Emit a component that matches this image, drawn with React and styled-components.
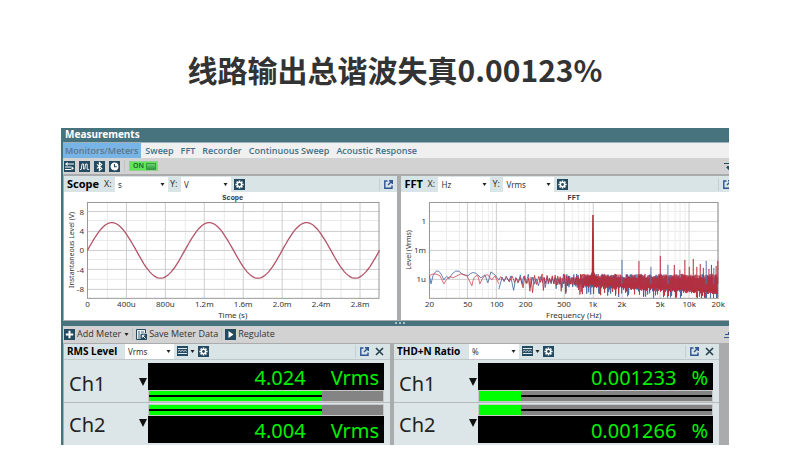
import React from "react";
import styled, { createGlobalStyle } from "styled-components";

const GlobalStyle = createGlobalStyle`
  * { box-sizing: border-box; }
  body { margin: 0; background: #fff; font-family: "Noto Sans", "Open Sans", sans-serif; }
  button, select { font: inherit; color: inherit; margin: 0; padding: 0; border: 0; background: none; }
  svg { display: block; flex: none; }
`;

const NAVY = "#234a60";
const TEAL = "#47737f";

const Page = styled.main`
  padding: 47px 61px 30px;
`;

const Heading = styled.h1`
  margin: 0 0 37px;
  text-align: center;
  font: 700 30px/44px "Noto Sans CJK SC", sans-serif;
  color: #333;
`;

const Window = styled.section`
  border-left: 2px solid ${TEAL};
  background: #d2d2d2;
  font-size: 9px;
  line-height: 14px;
  color: #333;
  overflow: hidden;
`;

const TitleBar = styled.h2`
  margin: 0;
  height: 15px;
  padding-left: 2px;
  border-bottom: 1px solid #9db3bb;
  background: ${TEAL};
  color: #fff;
  font-size: 10px;
  line-height: 13px;
  font-weight: 700;
`;

const Tabs = styled.nav`
  display: flex;
  height: 15px;
  background: #f0f0f0;
`;

const Tab = styled.button`
  padding: 0 3px 0 ${(p) => (p.$active ? 2 : 4)}px;
  background: ${(p) => (p.$active ? "#78b4e6" : "none")};
  color: ${(p) => (p.$active ? "#5f7686" : "#3d7087")};
  font-family: "Open Sans", sans-serif;
  font-weight: 600;
  white-space: nowrap;
`;

const ToolBar = styled.div`
  display: flex;
  align-items: center;
  gap: ${(p) => p.$gap}px;
  height: 18px;
  padding-left: 1px;
  background: #d2d2d2;
  border-bottom: ${(p) => p.$rule}px solid #a9abad;
`;

const IconButton = styled.button`
  display: flex;
  align-items: center;
  flex: none;
  gap: 2px;
  color: ${NAVY};
  white-space: nowrap;
`;

const CommandText = styled.span`
  font-family: "Open Sans", sans-serif;
  color: #333;
`;

const Toggle = styled.button`
  display: flex;
  align-items: center;
  justify-content: space-between;
  width: 29px;
  height: 10px;
  padding: 0 1px 0 3px;
  border: 1px solid #8fd08a;
  background: #5fe657;
  color: #245b2c;
  font-size: 7px;
  line-height: 8px;
  font-weight: 600;
`;

const Knob = styled.span`
  width: 10px;
  height: 7px;
  border: 1px solid #3c9a45;
  background: linear-gradient(#6ad36a, #2f9a40);
`;

const Separator = styled.span`
  width: 1px;
  height: 12px;
  background: #bfc4c6;
`;

const Spacer = styled.span`
  flex: 1;
`;

const Edge = styled.span`
  display: flex;
  width: 5px;
  overflow: hidden;
`;

const Plots = styled.div`
  display: grid;
  grid-template-columns: 334fr 4px 328fr;
  padding-left: 1px;
  background: #a9abad;
  border-bottom: 1px solid #a9abad;
`;

const Panel = styled.section`
  min-width: 0;
  background: ${(p) => p.$bg};
`;

const PanelHeader = styled.header`
  display: flex;
  align-items: center;
  height: 16px;
  padding-left: 3px;
  background: #d9e4e7;
  border-bottom: ${(p) => (p.$line ? "1px solid #bfc9cc" : "0")};
`;

const PanelTitle = styled.h3`
  margin: 0;
  width: ${(p) => p.$width}px;
  flex: none;
  font-size: ${(p) => p.$size}px;
  font-weight: 700;
  color: #000;
  white-space: nowrap;
`;

const FieldLabel = styled.label`
  width: 11px;
  flex: none;
  white-space: nowrap;
`;

const Picker = styled.span`
  display: grid;
  align-items: center;
  flex: none;
  width: ${(p) => p.$width}px;
  height: 15px;
  margin-right: ${(p) => p.$after}px;
  background: #fff;
  > * { grid-area: 1 / 1; }
  > svg { justify-self: end; margin-right: 3px; pointer-events: none; }
`;

const Select = styled.select`
  appearance: none;
  width: 100%;
  height: 15px;
  padding-left: 3px;
  font-size: 8px;
  line-height: 15px;
`;

const PanelActions = styled.div`
  display: flex;
  align-items: center;
  flex: none;
  gap: 6px;
  width: ${(p) => p.$width}px;
  height: 13px;
  margin-left: auto;
  padding-left: 4px;
  border-left: 1px solid #c5d0d3;
  overflow: hidden;
`;

const ToolGroup = styled.div`
  display: flex;
  gap: 3px;
`;

const Chart = styled.svg`
  width: 100%;
  height: auto;
  background: #fff;
  font-size: 8px;
  fill: #333;
`;

const PlotTitle = styled.text`
  font: 700 7px "Liberation Mono", monospace;
  text-anchor: middle;
`;

const AxisText = styled.text`
  font-size: ${(p) => p.$size || 8}px;
  text-anchor: ${(p) => p.$anchor || "middle"};
`;

const Splitter = styled.div`
  display: flex;
  justify-content: center;
  align-items: center;
  gap: 2px;
  height: 5px;
  padding-left: 8px;
  background: ${TEAL};
`;

const Grip = styled.i`
  width: 2px;
  height: 2px;
  background: #a9c3cc;
`;

const Meters = styled.div`
  display: grid;
  grid-template-columns: 326fr 4px 325fr 10px;
  padding-left: 1px;
  background: #a9abad;
`;

const Channel = styled.div`
  display: grid;
  grid-template-columns: 75px 9px 1fr;
  padding: ${(p) => (p.$flip ? "1px 6px 2px 0" : "3px 6px 0 0")};
  border-bottom: ${(p) => (p.$flip ? "0" : "1px solid #b5babc")};
`;

const ChannelName = styled.div`
  height: 39px;
  padding-left: 5px;
  font-size: 20px;
  line-height: 42px;
  color: #222;
`;

const ChannelMenu = styled.button`
  display: flex;
  align-items: center;
`;

const Display = styled.div`
  display: flex;
  flex-direction: ${(p) => (p.$flip ? "column-reverse" : "column")};
  justify-content: flex-end;
  min-width: 0;
`;

const Readout = styled.div`
  display: flex;
  justify-content: flex-end;
  gap: ${(p) => p.$gap}px;
  height: 27px;
  padding-right: 5px;
  background: #000;
  color: #00f000;
  font-size: 20px;
  line-height: 29px;
`;

const Track = styled.div`
  position: relative;
  height: 12px;
  border: 1px solid #c8c8c8;
  background: #848484;
`;

const Fill = styled.div`
  height: 100%;
  background: #00ff00;
`;

const CenterLine = styled.div`
  position: absolute;
  top: 4px;
  left: ${(p) => (p.$rest ? "auto" : 0)};
  right: ${(p) => (p.$rest ? 0 : "auto")};
  height: 2px;
  background: #000;
`;

const Caret = () => (
  <svg width="5" height="3" viewBox="0 0 5 3"><path d="M.5 0h4L2.5 3z" fill="#222" /></svg>
);

const Tile = ({ children }) => (
  <svg width="11" height="11" viewBox="0 0 11 11">
    <rect width="11" height="11" fill={NAVY} />
    <g fill="none" stroke="#fff" strokeWidth="1.1">{children}</g>
  </svg>
);

const SwapIcon = () => (
  <Tile><path d="M3 3h7M1 6h6M1 8.5h6" /><path d="M1 3l2.5-2v4zM10 7.2L7.500 5.200v4z" fill="#fff" stroke="none" /></Tile>
);
const WavesIcon = () => (
  <Tile><path d="M1 8.500h1.200L3 3h1.600v5h1.200L6.600 3h1.600v5.400h2" strokeWidth=".9" /></Tile>
);
const BluetoothIcon = () => (
  <Tile><path d="M3 3.400l4.800 4L5.400 9.500v-8l2.400 2L3 7.500" /></Tile>
);
const ClockIcon = () => (
  <Tile><circle cx="5.5" cy="5.5" r="3.4" fill="#fff" /><path d="M5.5 3v2.800h2.300" stroke={NAVY} /></Tile>
);
const GearIcon = () => (
  <Tile>
    <path d="M5.5 1.400v8.200M1.400 5.500h8.200M2.600 2.600l5.800 5.800M8.400 2.600L2.600 8.400" strokeWidth="1.6" />
    <circle cx="5.5" cy="5.5" r="2.8" fill="#fff" stroke="none" />
    <circle cx="5.5" cy="5.5" r="1.4" fill={NAVY} stroke="none" />
  </Tile>
);
const PlusIcon = () => (
  <Tile><path d="M5.5 1.800v7.400M1.800 5.500h7.400" strokeWidth="2" /></Tile>
);
const PlayIcon = () => (
  <Tile><path d="M3.5 2l5 3.500-5 3.500z" fill="#fff" stroke="none" /></Tile>
);
const SaveIcon = () => (
  <svg width="11" height="11" viewBox="0 0 11 11" fill="none" stroke={NAVY}>
    <path d="M9.5 4V.5h-9v10H5" fill="#e9eef0" />
    <path d="M2 3h2M5 3h3M2 5h2M2 7h2M2 9h2" strokeWidth=".8" />
    <path d="M5 5.200h5.500v5.300H5z" fill={NAVY} />
    <path d="M9.5 9.500L6.500 6.500M6.300 8.600V6.300h2.300" stroke="#fff" />
  </svg>
);
const RangeIcon = () => (
  <svg width="11" height="10" viewBox="0 0 12 10" preserveAspectRatio="none">
    <path fill={NAVY} d="M0 0h12v10H0z" />
    <path fill="#d9e4e7" d="M1 2h10v1H1zM1 7h10v1H1z" />
    <path fill="none" stroke="#fff" strokeWidth=".8" d="M1 5.400l1.600-1 1.600 1 1.600-1 1.600 1 1.600-1 1.600 1" />
  </svg>
);
const OpenIcon = () => (
  <svg width="9" height="9" viewBox="0 0 9 9" fill="none" stroke="#2e5493" strokeWidth="1.4">
    <path d="M3.5 1H.8v7.300H8V5.600M5 .8h3.300V4M8 1L4 5" />
  </svg>
);
const CloseIcon = () => (
  <svg width="9" height="9" viewBox="0 0 9 9" stroke="#24404f" strokeWidth="1.6">
    <path d="M1 1l7 7M8 1L1 8" />
  </svg>
);
const MenuEdgeIcon = () => (
  <svg width="9" height="9" viewBox="0 0 9 9" fill="none" stroke={NAVY}>
    <path d="M0 1.500h9M3 4.500h6" /><path d="M2 5h5L4.500 8z" fill={NAVY} stroke="none" />
  </svg>
);
const DownEdgeIcon = () => (
  <svg width="9" height="9" viewBox="0 0 9 9" fill="none" stroke="#2e5493">
    <path d="M0 7.500h9M1 4.500h6M4.500 2v3" />
  </svg>
);
const DropTriangle = () => (
  <svg width="8" height="8" viewBox="0 0 8 8"><path d="M0 0h8L4 8z" fill="#111" /></svg>
);

function Choice({ label, value, width, after = 0 }) {
  return (
    <Picker $width={width} $after={after}>
      <Select aria-label={label} defaultValue={value}>
        <option>{value}</option>
      </Select>
      <Caret />
    </Picker>
  );
}

function AxisChoice({ id, axis, value, width, after }) {
  return (
    <>
      <FieldLabel htmlFor={id}>{axis}:</FieldLabel>
      <Picker $width={width} $after={after}>
        <Select id={id} defaultValue={value}>
          <option>{value}</option>
        </Select>
        <Caret />
      </Picker>
    </>
  );
}

const scopeX = (ms) => 23.5 + ms * 97.5;
const scopeY = (v) => 58.5 - v * 4.85;
const sinePath = Array.from({ length: 151 }, (_, i) => {
  const t = i * 0.02;
  return `${i ? "L" : "M"}${scopeX(t).toFixed(1)} ${scopeY(5.75 * Math.sin(2 * Math.PI * t)).toFixed(1)}`;
}).join("");

function ScopeChart() {
  return (
    <Chart viewBox="0 0 334 128" role="img" aria-label="Scope">
      <PlotTitle x="169" y="8">Scope</PlotTitle>
      <g stroke="#e9e9e9">
        {[0.2, 0.6, 1, 1.4, 1.8, 2.2, 2.6].map((t) => (
          <path key={t} d={`M${Math.round(scopeX(t)) + 0.5} 10V107`} />
        ))}
        {[6, 2, -2, -6].map((v) => (
          <path key={v} d={`M23 ${Math.round(scopeY(v)) - 0.5}H316`} />
        ))}
      </g>
      <g stroke="#cdcdcd">
        {[0.4, 0.8, 1.2, 1.6, 2, 2.4, 2.8].map((t) => (
          <path key={t} d={`M${Math.round(scopeX(t)) - 0.5} 10V107`} />
        ))}
        {[8, 4, 0, -4, -8].map((v) => (
          <path key={v} d={`M23 ${Math.floor(scopeY(v)) + 0.5}H316`} />
        ))}
      </g>
      <rect x="23.5" y="10.5" width="292" height="96" fill="none" stroke="#999" />
      <path d={sinePath} fill="none" stroke="#b4546a" strokeWidth="1.3" />
      {[8, 4, 0, -4, -8].map((v) => (
        <AxisText key={v} x="20" y={scopeY(v) + 3} $anchor="end">{v}</AxisText>
      ))}
      {["0", "400u", "800u", "1.2m", "1.6m", "2.0m", "2.4m", "2.8m"].map((s, i) => (
        <AxisText key={s} x={scopeX(i * 0.4)} y="115">{s}</AxisText>
      ))}
      <AxisText x="169" y="126">Time (s)</AxisText>
      <AxisText $size={7} transform="translate(10 58) rotate(-90)">Instantaneous Level (V)</AxisText>
    </Chart>
  );
}

const fftX = (hz) => 28.5 + (Math.log10(hz) - Math.log10(20)) * 96.4;

function noisePath(seed) {
  let state = seed;
  const random = () => {
    state = (state * 1664525 + 1013904223) % 4294967296;
    return state / 4294967296;
  };
  let d = "";
  let x = 98;
  let i = 0;
  while (x < 317) {
    const progress = (x - 98) / 220;
    const dip = random() < 0.25 ? 4 + 5 * random() : 0;
    const up = 82 + 5 * random();
    const down = 88 + 11 * progress + 4 * random() + dip;
    const y = Math.min(i % 2 ? up : down, 106);
    d += `${i ? "L" : "M"}${x.toFixed(1)} ${y.toFixed(1)}`;
    x += Math.max(0.5, (2.8 - progress * 6) * (0.6 + random() * 0.8));
    i += 1;
  }
  return d;
}

const lowBlue = "M28.5 84L30 92 32 84Q36 75 40 82L43 88Q46 82 48 87Q55 74 61 82L67 84Q72 78 77 83L80 86 84 83 87 91 90 80 94 83 98 88";
const lowRed = "M28.5 84Q33 80 39 84L43 92Q48 82 52 86L60 82 66 84 71 94Q73 82 77 84L79 92Q83 82 87 83L91 88 94 84 98 92";
const harmonics = [
  [2000, 68, 1], [3000, 69, 0], [4000, 75, 1], [5000, 64, 0], [6000, 73, 1], [7000, 73, 0], [8000, 78, 0],
  [9000, 68, 0], [10000, 75, 0], [11000, 67, 0], [12000, 75, 0], [13000, 72, 0], [14000, 76, 0],
  [15000, 69, 1], [16000, 77, 0], [17000, 73, 0], [18000, 76, 1], [19000, 74, 0], [19800, 69, 0],
];
const minorHz = [30, 40, 60, 70, 80, 90, 300, 400, 600, 700, 800, 900, 3000, 4000, 6000, 7000, 8000, 9000];
const majorHz = [[20, "20"], [50, "50"], [100, "100"], [200, "200"], [500, "500"], [1000, "1k"], [2000, "2k"], [5000, "5k"], [10000, "10k"], [20000, "20k"]];
const levels = [[29.5, "1"], [58.5, "1m"], [87.5, "1u"]];

function FftChart() {
  return (
    <Chart viewBox="0 0 328 128" role="img" aria-label="FFT">
      <PlotTitle x="173" y="8">FFT</PlotTitle>
      <g stroke="#ececec">
        {minorHz.map((f) => <path key={f} d={`M${Math.round(fftX(f)) + 0.5} 10V107`} />)}
        {[19.5, 39.5, 48.5, 68.5, 77.5, 97.5].map((y) => <path key={y} d={`M29 ${y}H318`} />)}
      </g>
      <g stroke="#cdcdcd">
        {majorHz.map(([f]) => <path key={f} d={`M${Math.floor(fftX(f)) + 0.5} 10V107`} />)}
        {levels.map(([y]) => <path key={y} d={`M29 ${y}H318`} />)}
      </g>
      <rect x="28.5" y="10.5" width="289" height="96" fill="none" stroke="#999" />
      <g fill="none" strokeWidth="0.8" strokeLinejoin="bevel">
        <path d={lowBlue} stroke="#3d61a0" />
        <path d={lowRed} stroke="#d24650" />
        <path d={noisePath(17)} stroke="#3d61a0" />
        <path d={noisePath(91)} stroke="#bb2b38" />
        {harmonics.map(([f, y, blue]) => (
          <path key={f} d={`M${fftX(f).toFixed(1)} 92V${y}`} stroke={blue ? "#5575ad" : "#bb2b38"} strokeWidth="1" />
        ))}
      </g>
      <path d="M188 90L191 80 191.500 23h1.500L193.500 80 197 90z" fill="#b32c38" />
      {levels.map(([y, s]) => <AxisText key={s} x="25" y={y + 3} $anchor="end">{s}</AxisText>)}
      {majorHz.map(([f, s]) => <AxisText key={s} x={fftX(f)} y="115">{s}</AxisText>)}
      <AxisText x="173" y="126">Frequency (Hz)</AxisText>
      <AxisText $size={7} transform="translate(10 58) rotate(-90)">Level (Vrms)</AxisText>
    </Chart>
  );
}

function ChannelRow({ name, value, unit, level, lineOverRest, flip, gap }) {
  const lineWidth = lineOverRest ? 100 - level : level;
  return (
    <Channel $flip={flip}>
      <ChannelName>{name}</ChannelName>
      <ChannelMenu aria-label={`${name} options`}><DropTriangle /></ChannelMenu>
      <Display $flip={flip}>
        <Readout $gap={gap}><span>{value}</span><span>{unit}</span></Readout>
        <Track role="meter" aria-label={`${name} level`} aria-valuenow={level} aria-valuemin={0} aria-valuemax={100}>
          <Fill style={{ width: `${level}%` }} />
          <CenterLine $rest={lineOverRest} style={{ width: `${lineWidth}%` }} />
        </Track>
      </Display>
    </Channel>
  );
}

function MeterPanel({ title, titleWidth, unit, pickerWidth, actionsWidth, rows, level, lineOverRest, gap }) {
  return (
    <Panel $bg="#dce6e8">
      <PanelHeader $line>
        <PanelTitle $width={titleWidth} $size={10}>{title}</PanelTitle>
        <Choice label={`${title} unit`} value={unit} width={pickerWidth} after={3} />
        <ToolGroup>
          <IconButton aria-label="Range"><RangeIcon /><Caret /></IconButton>
          <IconButton aria-label="Settings"><GearIcon /></IconButton>
        </ToolGroup>
        <PanelActions $width={actionsWidth}>
          <IconButton aria-label="Open in window"><OpenIcon /></IconButton>
          <IconButton aria-label="Close"><CloseIcon /></IconButton>
        </PanelActions>
      </PanelHeader>
      {rows.map((value, i) => (
        <ChannelRow key={value} name={`Ch${i + 1}`} value={value} unit={unit} level={level}
          lineOverRest={lineOverRest} flip={i === 1} gap={gap} />
      ))}
    </Panel>
  );
}

export default function App() {
  return (
    <Page>
      <GlobalStyle />
      <Heading>线路输出总谐波失真0.00123%</Heading>
      <Window>
        <TitleBar>Measurements</TitleBar>
        <Tabs>
          <Tab $active>Monitors/Meters</Tab>
          {["Sweep", "FFT", "Recorder", "Continuous Sweep", "Acoustic Response"].map((t) => <Tab key={t}>{t}</Tab>)}
        </Tabs>
        <ToolBar $gap={4} $rule={2}>
          <IconButton aria-label="Input and output"><SwapIcon /></IconButton>
          <IconButton aria-label="Signals"><WavesIcon /></IconButton>
          <IconButton aria-label="Bluetooth"><BluetoothIcon /></IconButton>
          <IconButton aria-label="Clock"><ClockIcon /></IconButton>
          <Separator />
          <Toggle aria-pressed="true">ON<Knob /></Toggle>
          <Spacer />
          <Edge><MenuEdgeIcon /></Edge>
        </ToolBar>
        <Plots>
          <Panel $bg="#fff">
            <PanelHeader>
              <PanelTitle $width={37} $size={11}>Scope</PanelTitle>
              <AxisChoice id="scope-x" axis="X" value="s" width={53} after={2} />
              <AxisChoice id="scope-y" axis="Y" value="V" width={50} after={3} />
              <IconButton aria-label="Scope settings"><GearIcon /></IconButton>
              <PanelActions $width={18}>
                <IconButton aria-label="Open scope in window"><OpenIcon /></IconButton>
              </PanelActions>
            </PanelHeader>
            <ScopeChart />
          </Panel>
          <span />
          <Panel $bg="#fff">
            <PanelHeader>
              <PanelTitle $width={23} $size={11}>FFT</PanelTitle>
              <AxisChoice id="fft-x" axis="X" value="Hz" width={52} after={2} />
              <AxisChoice id="fft-y" axis="Y" value="Vrms" width={51} after={3} />
              <IconButton aria-label="FFT settings"><GearIcon /></IconButton>
              <PanelActions $width={11}>
                <IconButton aria-label="Open FFT in window"><OpenIcon /></IconButton>
              </PanelActions>
            </PanelHeader>
            <FftChart />
          </Panel>
        </Plots>
        <Splitter><Grip /><Grip /><Grip /></Splitter>
        <ToolBar $gap={3} $rule={1}>
          <IconButton><PlusIcon /><CommandText>Add Meter</CommandText></IconButton>
          <Caret />
          <Separator />
          <IconButton><SaveIcon /><CommandText>Save Meter Data</CommandText></IconButton>
          <Separator />
          <IconButton><PlayIcon /><CommandText>Regulate</CommandText></IconButton>
          <Spacer />
          <Edge><DownEdgeIcon /></Edge>
        </ToolBar>
        <Meters>
          <MeterPanel title="RMS Level" titleWidth={58} unit="Vrms" pickerWidth={49} actionsWidth={35}
            rows={["4.024", "4.004"]} level={74} gap={25} />
          <span />
          <MeterPanel title="THD+N Ratio" titleWidth={72} unit="%" pickerWidth={50} actionsWidth={34}
            rows={["0.001233", "0.001266"]} level={18} lineOverRest gap={15} />
        </Meters>
      </Window>
    </Page>
  );
}
